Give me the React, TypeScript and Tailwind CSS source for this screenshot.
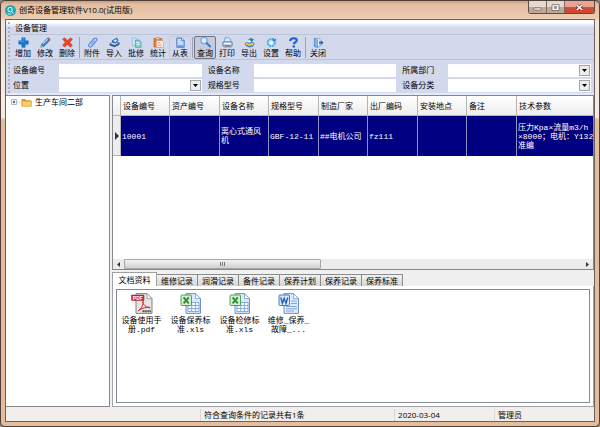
import type { ReactNode } from 'react'
import clsx from 'clsx'

const ui = 'font-["Open_Sans","Noto_Sans_CJK_SC",sans-serif]'
const mono = 'font-["Liberation_Mono","Noto_Sans_CJK_SC",monospace]'

type Tool = { label: string; icon: ReactNode; pressed?: boolean; framed?: boolean }

const toolGroups: Tool[][] = [
  [
    {
      label: '增加',
      icon: (
        <>
          <path d="M4.2.8h3.6v3.4h3.4v3.6H7.8v3.4H4.2V7.8H.8V4.2h3.4z" fill="#1778d2" stroke="#0b56a8" strokeWidth=".5" />
          <path d="M5 1.5h1.4V5H1.6V4.8" stroke="#56a9ee" strokeWidth=".8" fill="none" />
        </>
      ),
    },
    {
      label: '修改',
      icon: (
        <>
          <path d="M1 11l1-3.5L8.5 1l2.5 2.4L4.5 10z" fill="#2a7fdc" stroke="#164f9c" strokeWidth=".6" />
          <path d="M3 7.6l5.7-5.3" stroke="#bfe0ff" strokeWidth="1.2" />
          <path d="M8 1.5L9.2.4l2.4 2.2L10.4 4z" fill="#e2493a" />
          <path d="M1 11l.8-2.6L3.6 10z" fill="#fff" stroke="#555" strokeWidth=".4" />
        </>
      ),
    },
    { label: '删除', icon: <path d="M.6 2.2L2.8.8 6 3.7 9.4.8l2 1.8-3 3.2 3 3.4-2.4 2L6 8l-3 3-2.4-2 3-3.2z" fill="#ee4526" stroke="#b92410" strokeWidth=".5" /> },
  ],
  [
    {
      label: '附件',
      icon: (
        <>
          <path d="M10.2 4.2L5.5 9.8c-2.2 2-5 0-3-2.3l5-5.6c2-1.8 4.7.3 2.9 2.3" fill="#c4d7f8" stroke="#5d8fe0" strokeWidth="1.4" />
          <path d="M4.5 8.3L8.2 4" stroke="#7ba5ea" strokeWidth="1.2" />
        </>
      ),
    },
    {
      label: '导入',
      icon: (
        <>
          <path d="M.6 7l5.2-2.6L11.5 6v2.4L6 11.3.6 9.2z" fill="#39618f" />
          <path d="M1.5 7.2l4.5-2 4.4 1.3L6 8.8z" fill="#c9dcf0" />
          <path d="M3 3.8L8.8.6l1.6 3L7 7.2 3.6 6z" fill="#2c72c8" />
          <path d="M4.6 4l3.4-1.6.8 1.5-2 1.6z" fill="#e8f3ff" />
        </>
      ),
    },
    {
      label: '批修',
      icon: (
        <>
          <path d="M1.5 1h4l2 2v6h-6z" fill="#cfe9f9" stroke="#74aedc" strokeWidth=".7" />
          <path d="M4.8 3.4h4L11 5.6v5.6H4.8z" fill="#8ed4c6" stroke="#3f93d8" strokeWidth=".8" />
          <path d="M6 6h3M6 8h3.7" stroke="#e9fbf5" strokeWidth=".9" />
        </>
      ),
    },
    {
      label: '统计',
      icon: (
        <>
          <path d="M1 1.6h8.6V11H1z" fill="#e57a3a" stroke="#ba5420" strokeWidth=".6" />
          <path d="M3.2.5h4v2.2h-4z" fill="#f6d4a6" stroke="#a16535" strokeWidth=".4" />
          <path d="M3.6 3.8h5.8l2 2v5.6H3.6z" fill="#fff2e7" stroke="#c87956" strokeWidth=".5" />
          <path d="M5 6h3.2M5 7.8h4.6M5 9.5h4.6" stroke="#d88d6b" strokeWidth=".7" />
        </>
      ),
    },
    {
      label: '从表',
      framed: true,
      icon: (
        <>
          <path d="M2 1.2h5.4L10 3.8v7.4H2z" fill="#c4dcfa" stroke="#2f62bb" strokeWidth=".9" />
          <path d="M7.2 1.2V4H10" fill="#fff" stroke="#2f62bb" strokeWidth=".8" />
          <path d="M3 9.8h6.2" stroke="#5b8be0" strokeWidth="1.4" />
        </>
      ),
    },
  ],
  [
    {
      label: '查询',
      pressed: true,
      icon: (
        <>
          <circle cx="4.4" cy="4" r="3.4" fill="#d7ecff" stroke="#6da2e4" strokeWidth="1.2" />
          <path d="M7.2 6.6l3.8 3.8" stroke="#3c78cf" strokeWidth="2.2" strokeLinecap="round" />
        </>
      ),
    },
    {
      label: '打印',
      icon: (
        <>
          <path d="M3.2.8h4l2 1.4 .4 3.4H2.6z" fill="#cfe6fb" stroke="#5b93d2" strokeWidth=".8" />
          <path d="M1 5.2h10l.4 4-1.2 1.8H2L.6 9z" fill="#9fb0c5" stroke="#5e7087" strokeWidth=".6" />
          <path d="M2 6.3h8v1.8H2z" fill="#f4f7fb" />
          <path d="M3 9.5h6" stroke="#4d74a6" strokeWidth="1" />
        </>
      ),
    },
    {
      label: '导出',
      icon: (
        <>
          <path d="M.6 6.5L6 5l5.6 1.4-1.7 4-4.2 1-3.8-1.8z" fill="#2f78c4" />
          <path d="M1.4 5.6l4.4 1.8 5.2-1.7L9.6 9l-3.8.8L2.2 8.4z" fill="#f3c54a" />
          <path d="M4 3.4L8.2.6l.5 1.4 2.4.2-2.7 3.4-2.2-.8z" fill="#2c86b0" />
          <path d="M2.8 5l3.2-1.6 2.2 1.8L6 6.2z" fill="#fff" />
        </>
      ),
    },
    {
      label: '设置',
      icon: (
        <>
          <circle cx="5.8" cy="6.2" r="4" fill="#aee2f7" stroke="#4fb2e6" strokeWidth="2.2" strokeDasharray="2.4 .7" />
          <circle cx="5.8" cy="6.2" r="1.9" fill="#f4fbff" />
          <path d="M6.8 3l1.4-2.2 1 1.6 2-.6-.6 2.6-2.6.6z" fill="#2d8bdc" />
        </>
      ),
    },
    {
      label: '帮助',
      icon: (
        <>
          <path d="M2.4 4.3C2.4 .6 10 .4 9.6 3.8c-.2 2-3.2 2-3.2 4.2" fill="none" stroke="#1c62c9" strokeWidth="2.4" />
          <circle cx="6.3" cy="10.4" r="1.4" fill="#1c62c9" />
        </>
      ),
    },
  ],
  [
    {
      label: '关闭',
      icon: (
        <>
          <path d="M1.5 1.5h6v9h-6z" fill="#f2f8ff" stroke="#6e9cd4" strokeWidth=".8" />
          <path d="M1.5 1.5L5 3v8.6l-3.5-1.4z" fill="#7db4ec" stroke="#3368ad" strokeWidth=".5" />
          <path d="M6.6 5.2h2V3.6l3 2.6-3 2.6V7.2h-2z" fill="#2f5fb4" />
          <path d="M7.2 9.2h2.4" stroke="#e0b84c" strokeWidth="1" />
        </>
      ),
    },
  ],
]

const fields = [
  { id: 'code', label: '设备编号', select: false },
  { id: 'name', label: '设备名称', select: false },
  { id: 'dept', label: '所属部门', select: true },
  { id: 'place', label: '位置', select: true },
  { id: 'spec', label: '规格型号', select: false },
  { id: 'kind', label: '设备分类', select: true },
]

const columns = [
  { title: '设备编号', value: '10001' },
  { title: '资产编号', value: '' },
  { title: '设备名称', value: '离心式通风机' },
  { title: '规格型号', value: 'GBF-12-11' },
  { title: '制造厂家', value: '##电机公司' },
  { title: '出厂编码', value: 'fz111' },
  { title: '安装地点', value: '' },
  { title: '备注', value: '' },
  { title: '技术参数', value: '压力Kpa×流量m3/h\n×8000；电机：Y132\n准编' },
]

const tabs = ['文档资料', '维修记录', '润滑记录', '备件记录', '保养计划', '保养记录', '保养标准']

const files = [
  { type: 'pdf', lines: ['设备使用手', '册.pdf'] },
  { type: 'xls', lines: ['设备保养标', '准.xls'] },
  { type: 'xls', lines: ['设备检修标', '准.xls'] },
  { type: 'doc', lines: ['维修_保养_', '故障_...'] },
]

function TitleBar() {
  return (
    <header className="relative flex h-[18px] shrink-0 items-center gap-[3px]">
      <svg viewBox="0 0 12 12" className="size-[11px]">
        <circle cx="6" cy="6" r="6" fill="#1fa9b5" />
        <circle cx="5.6" cy="5" r="2.4" fill="none" stroke="#fff" strokeWidth="1" />
        <path d="M7.2 6.8l2 2.4M3 9.2c1.2.8 2.6.9 3.8.4" stroke="#fff" strokeWidth="1" fill="none" />
      </svg>
      <h1 className="text-[8px] leading-[12px] text-black">创奇设备管理软件V10.0(试用版)</h1>
      <div className="absolute top-0 right-0 flex h-[13px] overflow-hidden rounded-b-[3px] border border-t-0 border-[#5f4d42]">
        <button aria-label="最小化" className="flex w-[18px] items-center justify-center border-r border-[#7c6a5f] bg-linear-to-b from-[#e6d8cf] from-50% to-[#bda797] to-50%">
          <svg viewBox="0 0 9 7" className="h-[7px] w-[9px]">
            <path d="M1 4h7v2H1z" fill="#fff" stroke="#5b5350" strokeWidth=".6" />
          </svg>
        </button>
        <button aria-label="最大化" className="flex w-[18px] items-center justify-center border-r border-[#7c6a5f] bg-linear-to-b from-[#e6d8cf] from-50% to-[#bda797] to-50%">
          <svg viewBox="0 0 9 7" className="h-[7px] w-[9px]">
            <path d="M1 .7h7v5.8H1z" fill="#fff" stroke="#5b5350" strokeWidth=".7" />
            <path d="M3.3 2.6h2.4v1.8H3.3z" fill="#c3b3a8" stroke="#5b5350" strokeWidth=".6" />
          </svg>
        </button>
        <button aria-label="关闭窗口" className="flex w-[29px] items-center justify-center bg-linear-to-b from-[#e8a595] from-45% to-[#cc4a32] to-55%">
          <svg viewBox="0 0 9 7" className="h-[7px] w-[9px]">
            <path d="M1.8 1l5.4 5M7.2 1L1.8 6" stroke="#6b2a20" strokeWidth="2.8" />
            <path d="M1.8 1l5.4 5M7.2 1L1.8 6" stroke="#fff" strokeWidth="1.7" />
          </svg>
        </button>
      </div>
    </header>
  )
}

function Toolbar() {
  return (
    <div role="toolbar" className="flex h-[25px] items-center border-b border-[#bcc4d8] pl-[4px]">
      {toolGroups.map((group, i) => (
        <div key={i} className="flex items-center">
          {i > 0 && <span className="mx-px h-[21px] w-px bg-[#9a9fbc]" />}
          {group.map((tool) => (
            <button
              key={tool.label}
              aria-pressed={tool.pressed}
              className={clsx(
                'flex h-[23px] w-[22px] flex-col items-center rounded-[2px] border',
                tool.pressed && 'border-[#6f7583] bg-[#c5cbdb]',
                tool.framed && 'border-[#c3cae0]',
                !tool.pressed && !tool.framed && 'border-transparent'
              )}
            >
              <svg viewBox="0 0 12 12" className="size-[11px] shrink-0">{tool.icon}</svg>
              <span className="text-[8px] leading-[10px] whitespace-nowrap">{tool.label}</span>
            </button>
          ))}
        </div>
      ))}
    </div>
  )
}

function Filters() {
  return (
    <form className="grid grid-cols-3 gap-x-[6px] gap-y-px border-b-2 border-[#e6eaf6] pt-[3px] pr-[3px] pb-px pl-[5px]">
      {fields.map((field) => (
        <div key={field.id} className="flex h-[14px] items-center">
          <label htmlFor={field.id} className="w-[46px] shrink-0 text-[8px] leading-[12px]">{field.label}</label>
          {field.select ? (
            <div className="relative h-[13px] min-w-0 flex-1">
              <select id={field.id} className="block h-full w-full appearance-none bg-white px-1 text-[8px] outline-none" />
              <span className="pointer-events-none absolute top-px right-px flex size-[11px] items-center justify-center border border-[#a5a5a5] bg-[#ececec]">
                <svg viewBox="0 0 5 3" className="h-[3px] w-[5px]"><path d="M0 0h5L2.5 3z" /></svg>
              </span>
            </div>
          ) : (
            <input id={field.id} className="h-[13px] min-w-0 flex-1 bg-white px-1 text-[8px] outline-none" />
          )}
        </div>
      ))}
    </form>
  )
}

function Tree() {
  return (
    <nav className="w-[104px] shrink-0 border border-[#85888f] border-l-0 bg-white pt-px pl-[5px]">
      <button className="flex items-center text-[8px] leading-[10px]">
        <svg viewBox="0 0 9 7" className="mr-px h-[7px] w-[9px]">
          <path d="M.5.5h5v5h-5z" fill="#fff" stroke="#9aa3b5" strokeWidth=".8" />
          <path d="M1.7 3h2.6M3 1.7v2.6" stroke="#222" strokeWidth=".8" />
          <path d="M6 3h3" stroke="#aaa" strokeWidth=".6" strokeDasharray="1 1" />
        </svg>
        <svg viewBox="0 0 11 9" className="mr-[3px] h-[9px] w-[11px]">
          <path d="M.5 1h3.8l1 1.2h5v6H.5z" fill="#d99a24" />
          <path d="M1 3.2h9.5v5H1z" fill="#f8cf62" stroke="#d79c2c" strokeWidth=".5" />
        </svg>
        生产车间二部
      </button>
    </nav>
  )
}

function Grid() {
  return (
    <div className="flex h-[175px] flex-col border border-[#85888f] bg-white">
      <div className="min-h-0 flex-1 overflow-hidden">
        <table className="w-[524px] table-fixed border-separate border-spacing-0">
          <colgroup>
            <col className="w-[8px]" />
            {columns.map((c, i) => (
              <col key={c.title} className={i === 8 ? 'w-[120px]' : i % 2 ? 'w-[50px]' : 'w-[49px]'} />
            ))}
          </colgroup>
          <thead>
            <tr className="h-[20px] bg-linear-to-b from-white to-[#ececec]">
              <th className="border-r border-b border-[#b4b4b4]" />
              {columns.map((c) => (
                <th key={c.title} className="border-r border-b border-[#b4b4b4] px-[2px] text-left text-[8px] leading-[10px] font-normal whitespace-nowrap">
                  {c.title}
                </th>
              ))}
            </tr>
          </thead>
          <tbody>
            <tr className="h-[40px] bg-[#000080] text-white">
              <td className="border-r border-b border-[#b4b4b4] bg-[#ededed]">
                <svg viewBox="0 0 4 8" className="mx-auto h-[8px] w-[4px]"><path d="M0 0l4 4-4 4z" fill="#333" /></svg>
              </td>
              {columns.map((c, i) => (
                <td
                  key={c.title}
                  className={clsx(
                    'border-r border-[#8f8fc4] px-px text-[8px] leading-[9px]',
                    mono,
                    i === 8 && 'whitespace-pre'
                  )}
                >
                  {c.value}
                </td>
              ))}
            </tr>
          </tbody>
        </table>
      </div>
      <div className="flex h-[10px] shrink-0 items-center bg-[#ececec]">
        <button aria-label="向左" className="flex w-[11px] justify-center">
          <svg viewBox="0 0 3 5" className="h-[5px] w-[3px]"><path d="M3 0v5L0 2.5z" fill="#333" /></svg>
        </button>
        <div className="flex-1">
          <div className="flex h-[10px] w-[43%] items-center justify-center gap-px rounded-[1px] border border-[#a6a6a6] bg-linear-to-b from-[#f4f4f4] to-[#cfcfcf]">
            <span className="h-[4px] w-px bg-[#777]" />
            <span className="h-[4px] w-px bg-[#777]" />
            <span className="h-[4px] w-px bg-[#777]" />
          </div>
        </div>
        <button aria-label="向右" className="flex w-[11px] justify-center">
          <svg viewBox="0 0 3 5" className="h-[5px] w-[3px]"><path d="M0 0v5l3-2.5z" fill="#333" /></svg>
        </button>
      </div>
    </div>
  )
}

function FileIcon({ type }: { type: string }) {
  if (type === 'pdf') {
    return (
      <svg viewBox="0 0 22 21" className="h-[21px] w-[22px]">
        <path d="M5 .6h11l5 5v14.8H5z" fill="#e6e6e6" stroke="#666" strokeWidth=".8" />
        <path d="M16 .6v5h5z" fill="#fff" stroke="#888" strokeWidth=".7" />
        <path d="M.5 2H13v5.5H.5z" fill="#d5242a" stroke="#a4141b" strokeWidth=".5" />
        <text x="1.8" y="6.5" fontSize="5" fontWeight="bold" fontFamily="Liberation Sans" fill="#fff">PDF</text>
        <path d="M7 18c3-1.5 5.8-7.3 5.2-9.6-1.5-1 0 5.6 6.6 6.6 1.5-1.4-7-1.2-11.8 3z" fill="none" stroke="#d5242a" strokeWidth="1" />
        <path d="M11.5 18.3h8.5" stroke="#444" strokeWidth="2" strokeDasharray="1.4 .5" />
      </svg>
    )
  }
  const isWord = type === 'doc'
  const tint = isWord ? '#2860b4' : '#2f9137'
  return (
    <svg viewBox="0 0 22 21" className="h-[21px] w-[22px]">
      <path d="M6 .6h9.5l5 5v14.8H6z" fill="#dceafb" stroke="#5c88c2" strokeWidth=".9" />
      <path d="M15.5.6v5h5z" fill="#fff" stroke="#6790c4" strokeWidth=".7" />
      {isWord ? (
        <path d="M13 8h6M13 10.5h6M8 13.5h11M8 15.8h11M8 18h8" stroke="#84a9dc" strokeWidth="1" />
      ) : (
        <path d="M8 9.5h11v9H8zM8 12.5h11M8 15.5h11M11.7 9.5v9M15.4 9.5v9" fill="#f7fbff" stroke="#7fa5d6" strokeWidth=".9" />
      )}
      <rect x="1" y="2" width="10.5" height="10.5" rx="1" fill={isWord ? '#d8e7fb' : '#d5efcf'} stroke={tint} strokeWidth=".8" />
      {isWord ? (
        <path d="M2.8 4.5l1.6 5.8 1.8-5 1.8 5 1.8-5.8" fill="none" stroke={tint} strokeWidth="1.4" />
      ) : (
        <path d="M3.6 4.3l5.2 6M8.8 4.3l-5.2 6" stroke={tint} strokeWidth="2" />
      )}
    </svg>
  )
}

function Documents() {
  return (
    <section className="flex min-h-0 flex-1 flex-col pt-[2px]">
      <div role="tablist" className="flex h-[14px] shrink-0 items-end bg-[#f0f0f0]">
        {tabs.map((tab, i) => (
          <button
            key={tab}
            role="tab"
            aria-selected={i === 0}
            className={clsx(
              'border-t border-r text-[8px] leading-[10px] whitespace-nowrap',
              i === 0
                ? 'h-[14px] w-[45px] border-l border-[#a0a0a0] bg-white'
                : 'h-[12px] w-[41px] border-[#8c8c8c] bg-linear-to-b from-[#f2f2f2] to-[#d4d4d4]'
            )}
          >
            {tab}
          </button>
        ))}
      </div>
      <div className="min-h-0 flex-1 border border-t-0 border-[#a0a3a8] bg-white p-[3px]">
        <ul className="flex h-full items-start border border-[#85888f] pt-[3px]">
          {files.map((file) => (
            <li key={file.lines.join('')} className="w-[49px]">
              <a href="#" className={clsx('flex flex-col items-center text-[8px] leading-[9px] text-black', mono)}>
                <FileIcon type={file.type} />
                <span className="mt-[2px]">{file.lines[0]}</span>
                <span>{file.lines[1]}</span>
              </a>
            </li>
          ))}
        </ul>
      </div>
    </section>
  )
}

export default function App() {
  return (
    <div className="h-screen bg-[#8b8580]">
      <div
        className={clsx(
          'flex h-full flex-col overflow-hidden rounded-[5px] border border-[#4f4139] px-[4px] pb-[4px] text-black',
          'bg-[linear-gradient(#c49a7e_0px,#e3bd9f_3px,#ebcbb0_17px,#f1e4da_20px,#f4ece6_116px,#e6bd9c_119px)]',
          ui
        )}
      >
        <TitleBar />
        <main className="flex min-h-0 flex-1 flex-col border border-[#6d625b] bg-[#f0f0f0]">
          <div className="flex shrink-0 bg-linear-to-b from-white from-3% to-[#d3d9ed] to-10%">
            <div className="my-[2px] ml-[2px] w-[2px] shrink-0 border-l-2 border-dotted border-[#a9b0c8]" />
            <div className="min-w-0 flex-1">
              <h2 className="h-[15px] border-b border-[#bcc4d8] pt-[2px] pl-[5px] text-[8px] leading-[12px]">设备管理</h2>
              <div className="-ml-[2px]">
                <Toolbar />
                <Filters />
              </div>
            </div>
          </div>
          <div className="flex min-h-0 flex-1 gap-[2px]">
            <Tree />
            <div className="flex min-w-0 flex-1 flex-col">
              <Grid />
              <Documents />
            </div>
          </div>
          <footer className="flex h-[14px] shrink-0 items-center bg-[#f1eeec] pt-px text-[8px] leading-[12px]">
            <span className="w-[33%]" />
            <span className="w-[33%] border-l border-[#dcd8d5] pl-[3px]">符合查询条件的记录共有1条</span>
            <span className="w-[17%] border-l border-[#dcd8d5] pl-[3px]">2020-03-04</span>
            <span className="flex-1 border-l border-[#dcd8d5] pl-[3px]">管理员</span>
          </footer>
        </main>
      </div>
    </div>
  )
}
